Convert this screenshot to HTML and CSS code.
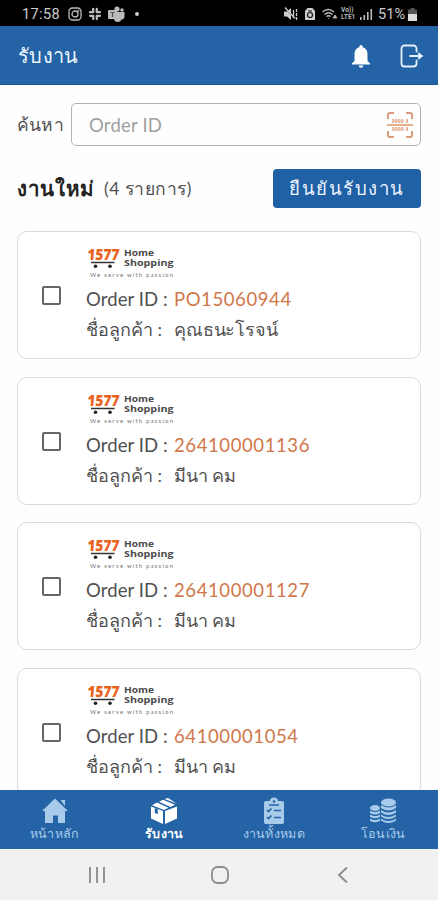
FILE: index.html
```html
<!DOCTYPE html>
<html lang="th">
<head>
<meta charset="utf-8">
<title>รับงาน</title>
<link rel="stylesheet" href="styles.css">
</head>
<body>
<div class="status">
  <div class="status-left">
    <span class="clock">17:58</span>
    <svg width="14" height="14" viewBox="0 0 14 14" fill="none" stroke="#bbb" stroke-width="1.300"><rect x="1" y="1" width="12" height="12" rx="3.500"/><circle cx="7" cy="7" r="3"/><circle cx="10.300" cy="3.700" r=".4"/></svg>
    <svg width="14" height="14" viewBox="0 0 14 14" stroke="#bbb" stroke-width="2.300" stroke-linecap="round"><path d="M5.200 2v3.200M2 5.200h3.200M8.800 2v3.200M8.800 5.200H12M2 8.800h3.200M5.200 8.800V12M8.800 8.800H12M8.800 8.800V12"/></svg>
    <svg width="17" height="16" viewBox="0 0 17 16" fill="#bbb"><circle cx="9" cy="3" r="2.600"/><circle cx="14" cy="4" r="1.800"/><path d="M6 6h10.500v5a3 3 0 0 1-3 2.500 4 4 0 0 1-7.500 0z"/><rect y="4" width="9" height="9" rx="1"/><path d="M2.500 6.500h4M4.500 6.500v4.500" stroke="#555" stroke-width="1.200"/></svg>
    <i class="dot"></i>
  </div>
  <div class="status-right">
    <svg width="14" height="14" viewBox="0 0 14 14" fill="#ccc"><path d="M0 4.500h3L7 1v12L3 9.500H0z"/><path d="M1 1l11 12" stroke="#000" stroke-width="1"/><path d="M1 .5l10 11M9.500 3v8M12.500 2v3M12.500 6v3M12.500 10v3" stroke="#ccc" stroke-width="1.300"/></svg>
    <svg class="s-lock" width="10" height="14" viewBox="0 0 10 14"><path d="M2.500 1h5L10 4v9H0V4z" fill="#ccc"/><circle cx="5" cy="8" r="2.500" fill="none" stroke="#111" stroke-width="1.200"/><path d="M3 4h4" stroke="#111"/></svg>
    <svg class="s-wifi" width="16" height="13" viewBox="0 0 16 13" fill="none" stroke="#bbb" stroke-width="1.400"><path d="M.5 4Q6 -1 12 4M2.500 6.500q4-3.500 8 0M4.500 8.500q2-1.500 4 0"/><path d="M11 10l2-3 2 3zM6 10.500h1" fill="#bbb" stroke-width=".8"/></svg>
    <div class="net"><span>Vo))</span><span>LTE1</span></div>
    <svg class="s-bars" width="13" height="12" viewBox="0 0 13 12" fill="#bbb"><path d="M0 9h1.600v3H0zM3.500 7h1.600v5h-1.600zM7 4h1.600v8H7zM10.500 1h1.600v11h-1.600z"/></svg>
    <span class="battery-text">51%</span>
    <svg class="s-bat" width="9" height="13" viewBox="0 0 9 13"><path d="M2.500 0h4v1.500H9V13H0V1.500h2.500z" fill="#555"/><path d="M0 6h9v7H0z" fill="#ddd"/></svg>
  </div>
</div>
<header class="appbar">
  <h1>รับงาน</h1>
  <svg class="bell" width="18" height="23" viewBox="0 0 18 23" fill="#fff"><path d="M9 0a1.700 1.700 0 0 1 1.700 1.700v.6C14 3.200 15.500 6 15.500 9v7l2.500 2.300V19.500H0V18.300L2.500 16V9C2.500 6 4 3.200 7.300 2.300V1.700A1.700 1.700 0 0 1 9 0zM6.700 20.500h4.600A2.300 2.300 0 0 1 6.700 20.500z"/></svg>
  <svg class="logout" width="24" height="24" viewBox="0 0 24 24" fill="none" stroke="#e7f1fc" stroke-width="1.800" stroke-linecap="round" stroke-linejoin="round"><path d="M16.500 7.500V4.500A3 3 0 0 0 13.500 1.500H4.500A3 3 0 0 0 1.500 4.500V19.500A3 3 0 0 0 4.500 22.500H13.500A3 3 0 0 0 16.500 19.500V16.500M10 12H22"/><path d="M19 9L22.500 12 19 15z" fill="#e7f1fc" stroke-width="1"/></svg>
</header>
<main>
  <div class="search">
    <label>ค้นหา</label>
    <div class="field">
      <span>Order ID</span>
      <svg width="28" height="28" viewBox="0 0 28 28" fill="none" stroke="#d99c7c" stroke-width="2"><path d="M2 8V4a2 2 0 0 1 2-2H8M20 2h4a2 2 0 0 1 2 2V8M26 20v4a2 2 0 0 1-2 2H20M8 26H4a2 2 0 0 1-2-2V20"/><path d="M1 14H27" stroke="#e5b08c"/><path d="M7 8v4M10 8v4M13 8v4M16 8v4M21 8v4M7 16v4M10 16v4M13 16v4M16 16v4M21 16v4" stroke-width="1.800" stroke="#e3ad90"/><path d="M6 10h12M6 18h12" stroke="#ecc6ae" stroke-width="2.500"/></svg>
    </div>
  </div>
  <div class="heading">
    <h2>งานใหม่</h2><span class="count">(4 รายการ)</span>
    <button>ยืนยันรับงาน</button>
  </div>
  <div class="list" id="list"></div>
</main>
<nav>
  <a><svg width="26" height="26" viewBox="0 0 26 26" fill="#a9cbea"><path d="M13 .5L26 13H23V25H16V17.500H11V25H3V13H0zM18.500 2H23V8z"/></svg><span>หน้าหลัก</span></a>
  <a class="active"><svg width="28" height="26" viewBox="0 0 28 26" fill="#fff"><path d="M1 8.500L13 13V26L1 20.500zM27 8.500L15 13V26L27 20.500zM14 12L2 7.200 7 4.500 18.500 9.800zM9 3.700L13 1.700 25 6.700 20.500 8.900zM14.500 1L18 0 26.500 5.500z"/><path d="M4.800 10v5l3 1.200v-5z" fill="#2363a6"/></svg><span>รับงาน</span></a>
  <a><svg width="22" height="26" viewBox="0 0 22 26"><path d="M3 3H7a4 3.500 0 0 1 8 0H19a2 2 0 0 1 2 2V24a2 2 0 0 1-2 2H3a2 2 0 0 1-2-2V5A2 2 0 0 1 3 3z" fill="#a9cbea"/><path d="M6 7h10M4 12l1.500 1.500L8.500 10.500M11 12.500h7M4 19l1.500 1.500L8.500 17.500M11 19.500h7" fill="none" stroke="#2363a6" stroke-width="1.600"/><circle cx="11" cy="3.500" r="1.200" fill="#2363a6"/></svg><span>งานทั้งหมด</span></a>
  <a><svg width="28" height="26" viewBox="0 0 28 26" fill="#a9cbea"><ellipse cx="19.500" cy="4.500" rx="7.500" ry="4"/><path d="M12 7q7.500 5 15 0v3q-7.500 5-15 0zM12 12q7.500 5 15 0v2.500q-7.500 5-15 0zM12 16.500q7.500 5 15 0v2q-7.500 5-15 0zM12 20.500q7.500 5 15 0v2q-7.500 5-15 0z"/><ellipse cx="6" cy="10" rx="5" ry="3"/><path d="M1 12.500q5 3 10 0v2.500q-5 3-10 0zM1 16.500q5 3 10 0v2.200q-5 3-10 0zM1 20.500q5 3 10 0v2.200q-5 3-10 0z"/></svg><span>โอนเงิน</span></a>
</nav>
<footer>
  <svg width="18" height="18" viewBox="0 0 18 18"><path d="M2 1v16M9 1v16M16 1v16" stroke="#939393" stroke-width="2"/></svg>
  <svg width="20" height="20" viewBox="0 0 20 20"><rect x="2" y="2" width="16" height="16" rx="5.500" fill="none" stroke="#8d8d8d" stroke-width="1.800"/></svg>
  <svg width="18" height="18" viewBox="0 0 18 18"><path d="M13 1.500L5 9l8 7.500" fill="none" stroke="#8d8d8d" stroke-width="1.900"/></svg>
</footer>
<script src="app.js"></script>
</body>
</html>
```
FILE: app.js
```js
const orders = [
  ["PO15060944", "คุณธนะโรจน์"],
  ["264100001136", "มีนา คม"],
  ["264100001127", "มีนา คม"],
  ["64100001054", "มีนา คม"],
];

const logo = `<svg class="logo" width="90" height="32" viewBox="0 0 90 32">
  <text class="lg-num" x="1" y="13" textLength="32" lengthAdjust="spacingAndGlyphs" transform="skewX(-4)">1577</text>
  <path d="M4 15.500H27.500" stroke="#333" stroke-width="1.500"/>
  <circle cx="8.500" cy="19.300" r="1.800" fill="#222"/><circle cx="23" cy="19.300" r="1.800" fill="#222"/>
  <text class="lg-name" x="37" y="8.500" textLength="30" lengthAdjust="spacingAndGlyphs">Home</text>
  <text class="lg-name" x="37" y="19" textLength="49.500" lengthAdjust="spacingAndGlyphs">Shopping</text>
  <text class="lg-tag" x="3" y="29.500" textLength="83">We serve with passion</text>
</svg>`;

document.getElementById("list").innerHTML = orders.map(([id, name]) => `
  <article class="card">
    <i class="check"></i>
    <div class="info">${logo}
      <p class="order"><span>Order ID :</span><b>${id}</b></p>
      <p class="cust"><span>ชื่อลูกค้า :</span><b>${name}</b></p>
    </div>
  </article>`).join("");
```
FILE: styles.css
```css
* { box-sizing: border-box; margin: 0; padding: 0; }
body { width: 438px; height: 900px; overflow: hidden; display: flex; flex-direction: column; background: #fefefe; color: #505050; font-family: Lato, "Noto Sans", sans-serif; }
svg { display: block; flex: none; overflow: visible; }
.status { height: 26px; flex: none; background: #000; color: #ccc; display: flex; justify-content: space-between; align-items: center; padding: 2px 21px 0 22px; font-family: Roboto, sans-serif; font-size: 14px; }
.status-left, .status-right { display: flex; align-items: center; }
.status-left { gap: 6px; }
.clock { width: 40px; letter-spacing: .4px; font-size: 14.500px; }
.dot { width: 4px; height: 4px; border-radius: 50%; background: #ccc; margin-left: 4px; }
.status-right { gap: 3px; }
.s-lock { margin: 0 4px; }
.net { width: 16px; display: flex; flex-direction: column; font-weight: 700; font-size: 6.500px; line-height: 7px; color: #bbb; }
.battery-text { font-size: 14.500px; margin-left: 2px; }
.appbar { height: 59px; flex: none; background: #2363a6; border-bottom: 1px solid #1c558f; display: flex; align-items: center; padding: 2px 14px 0 18px; color: #eef6ff; }
.appbar h1 { font-size: 20px; font-weight: 400; letter-spacing: .3px; flex: 1; }
.bell { margin-right: 30px; }
main { height: 705px; flex: none; overflow: hidden; padding: 18px 17px 0 17px; }
.search { height: 43px; display: flex; align-items: center; }
.search label { width: 54px; font-size: 17.500px; letter-spacing: .2px; }
.field { flex: 1; height: 43px; border: 1.500px solid #b2b2b2; border-radius: 5px; display: flex; align-items: center; justify-content: space-between; padding: 0 6px 0 17px; color: #a0a0a0; font-size: 18.500px; letter-spacing: .2px; }
.heading { height: 39px; margin-top: 23px; display: flex; align-items: center; }
h2 { width: 87px; font-size: 20.500px; font-weight: 700; letter-spacing: .7px; color: #222; white-space: nowrap; }
.count { flex: 1; font-size: 17.500px; letter-spacing: .5px; white-space: nowrap; }
button { width: 148px; height: 39px; border: 0; border-radius: 4px; background: #2060a5; color: #eef6ff; font: 400 18.500px Lato, "Noto Sans", sans-serif; letter-spacing: 1.500px; white-space: nowrap; }
.list { margin-top: 23px; display: flex; flex-direction: column; gap: 17.500px; }
.card { height: 128px; flex: none; border: 1.500px solid #dadada; border-radius: 10px; display: flex; padding: 15px 0 0 24px; background: #fff; }
.check { width: 19px; height: 19px; border: 2px solid #666; border-radius: 2px; margin: 39px 25px 0 0; flex: none; }
.info { display: flex; flex-direction: column; }
.logo { margin-left: 1px; }
.order, .cust { display: flex; white-space: nowrap; }
.order { font-size: 18.500px; line-height: 24px; margin-top: 8px; letter-spacing: .1px; }
.order b { font-weight: 400; color: #d0774a; letter-spacing: .6px; }
.cust { font-size: 18px; line-height: 28px; margin-top: 4px; }
.cust b { font-weight: 400; letter-spacing: -.15px; }
.order span, .cust span { width: 88px; }
.lg-num { font: 800 15.500px "Open Sans", sans-serif; fill: #e8641e; }
.lg-name { font: 700 8.500px "Open Sans", sans-serif; fill: #4a4a4a; }
.lg-tag { font: 6px Lato, sans-serif; fill: #777; }
nav { height: 59px; flex: none; background: #2363a6; display: grid; grid-template-columns: repeat(4, 1fr); color: #a9cbea; }
nav a { display: flex; flex-direction: column; align-items: center; padding-top: 8px; font-size: 12.500px; letter-spacing: .3px; line-height: 19px; }
nav .active { color: #fff; font-weight: 700; }
footer { height: 51px; flex: none; background: #f1f1f1; display: flex; justify-content: space-between; align-items: center; padding: 0 86px 0 88px; }
```
